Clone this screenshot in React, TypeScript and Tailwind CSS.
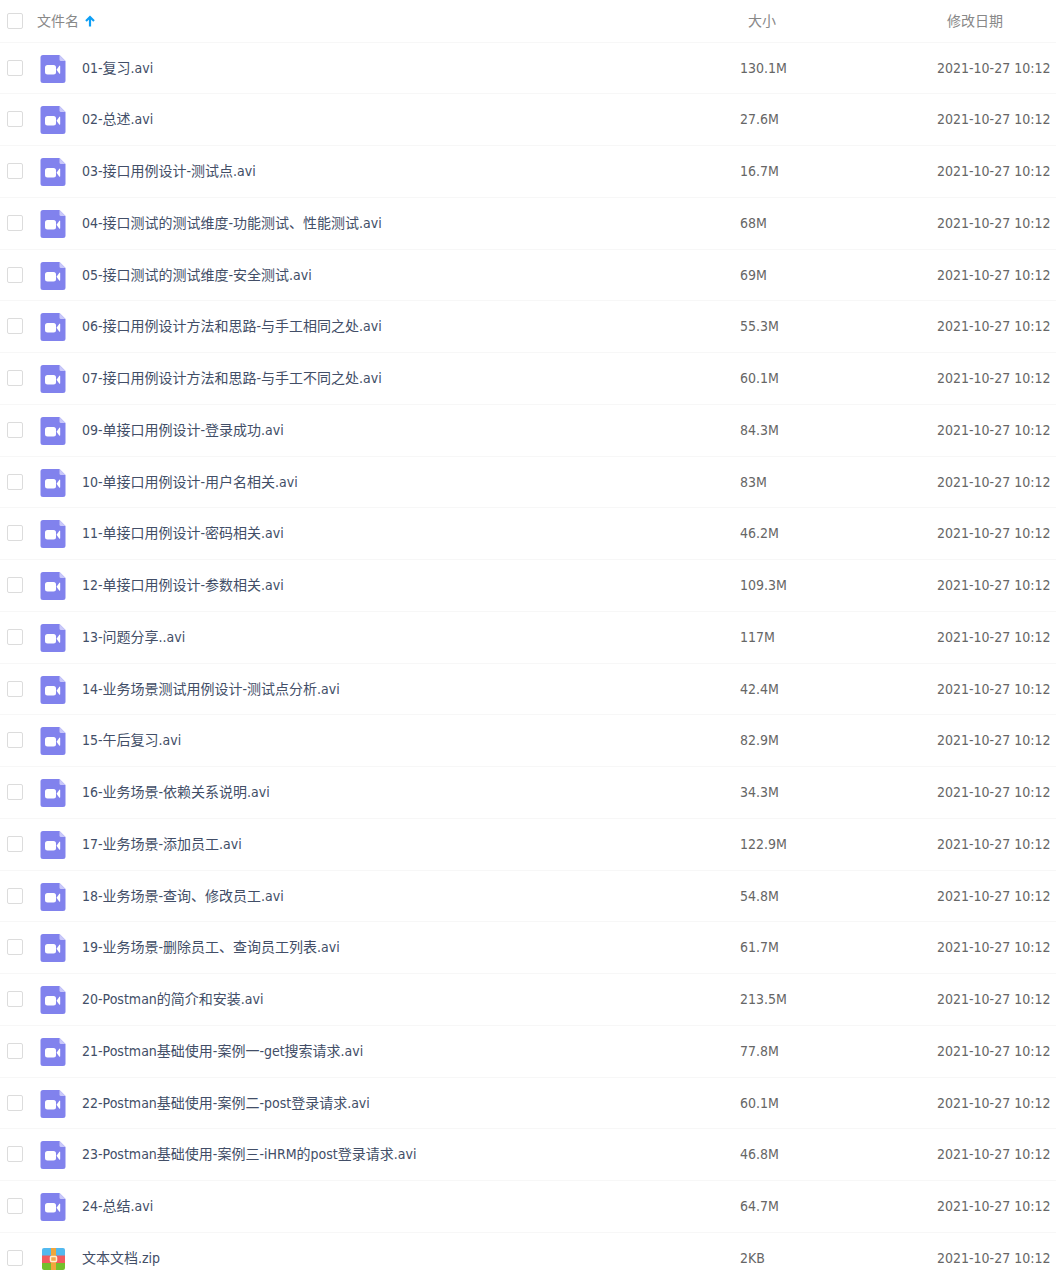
import { useState } from "react";

type FileItem = {
  name: string;
  size: string;
};

const MODIFIED = "2021-10-27 10:12";

const files: FileItem[] = [
  { name: "01-复习.avi", size: "130.1M" },
  { name: "02-总述.avi", size: "27.6M" },
  { name: "03-接口用例设计-测试点.avi", size: "16.7M" },
  { name: "04-接口测试的测试维度-功能测试、性能测试.avi", size: "68M" },
  { name: "05-接口测试的测试维度-安全测试.avi", size: "69M" },
  { name: "06-接口用例设计方法和思路-与手工相同之处.avi", size: "55.3M" },
  { name: "07-接口用例设计方法和思路-与手工不同之处.avi", size: "60.1M" },
  { name: "09-单接口用例设计-登录成功.avi", size: "84.3M" },
  { name: "10-单接口用例设计-用户名相关.avi", size: "83M" },
  { name: "11-单接口用例设计-密码相关.avi", size: "46.2M" },
  { name: "12-单接口用例设计-参数相关.avi", size: "109.3M" },
  { name: "13-问题分享..avi", size: "117M" },
  { name: "14-业务场景测试用例设计-测试点分析.avi", size: "42.4M" },
  { name: "15-午后复习.avi", size: "82.9M" },
  { name: "16-业务场景-依赖关系说明.avi", size: "34.3M" },
  { name: "17-业务场景-添加员工.avi", size: "122.9M" },
  { name: "18-业务场景-查询、修改员工.avi", size: "54.8M" },
  { name: "19-业务场景-删除员工、查询员工列表.avi", size: "61.7M" },
  { name: "20-Postman的简介和安装.avi", size: "213.5M" },
  { name: "21-Postman基础使用-案例一-get搜索请求.avi", size: "77.8M" },
  { name: "22-Postman基础使用-案例二-post登录请求.avi", size: "60.1M" },
  { name: "23-Postman基础使用-案例三-iHRM的post登录请求.avi", size: "46.8M" },
  { name: "24-总结.avi", size: "64.7M" },
  { name: "文本文档.zip", size: "2KB" },
];

function VideoIcon() {
  return (
    <svg width="26" height="28" viewBox="0 0 26 28" aria-hidden="true">
      <path
        d="M3 0H19.500l6 6v19.500a2.500 2.500 0 0 1-2.500 2.500H3A2.500 2.500 0 0 1 .5 25.500v-23A2.500 2.500 0 0 1 3 0z"
        fill="#8182ed"
      />
      <path d="M19.500 0l6 6H21A1.500 1.500 0 0 1 19.500 4.500z" fill="#c9c8fa" />
      <rect x="5" y="10" width="11" height="9.500" rx="2.500" fill="#fff" />
      <path d="M16.500 14.700l2.700-3.700q1-1 1 .4v6.600q0 1.400-1 .400z" fill="#fff" />
    </svg>
  );
}

function ZipIcon() {
  return (
    <svg width="26" height="28" viewBox="0 0 26 28" aria-hidden="true">
      <path d="M4 3h19a2 2 0 0 1 2 2v6H2V5a2 2 0 0 1 2-2z" fill="#52b9ef" />
      <path d="M2 10.500h23V18H2z" fill="#f25b5f" />
      <path d="M2 18h23v5a2 2 0 0 1-2 2H4a2 2 0 0 1-2-2z" fill="#73c02c" />
      <path d="M11 3h5v22h-5z" fill="#f0a63c" />
      <rect x="10.500" y="11.500" width="6" height="5" rx="1" fill="#f5a94a" stroke="#fff0d2" strokeWidth="1.500" />
    </svg>
  );
}

function SortArrow() {
  return (
    <svg width="10" height="12" viewBox="0 0 10 12" fill="none" aria-hidden="true">
      <path d="M5 11.500V2M1 6l4-4 4 4" stroke="#0e9ff5" strokeWidth="2.200" />
    </svg>
  );
}

function CheckBox({
  label,
  checked,
  onChange,
}: {
  label: string;
  checked: boolean;
  onChange: () => void;
}) {
  return (
    <input
      type="checkbox"
      aria-label={label}
      checked={checked}
      onChange={onChange}
      className="block size-4 appearance-none rounded-xs border border-[#dcdcdc] bg-white checked:border-[#0e9ff5] checked:bg-[#0e9ff5]"
    />
  );
}

export default function App() {
  const [selected, setSelected] = useState<string[]>([]);
  const allSelected = selected.length === files.length;

  const toggle = (name: string) =>
    setSelected((prev) =>
      prev.includes(name) ? prev.filter((n) => n !== name) : [...prev, name],
    );

  return (
    <main className="h-screen overflow-hidden bg-white font-[Tahoma,'DejaVu_Sans_Condensed','Noto_Sans_CJK_SC',sans-serif] text-sm">
      <table className="w-full table-fixed border-collapse text-left whitespace-nowrap">
        <colgroup>
          <col className="w-[37px]" />
          <col />
          <col className="w-[197px]" />
          <col className="w-[119px]" />
        </colgroup>
        <thead>
          <tr className="h-[42px] border-b border-[#f7f7f7] text-[#888]">
            <th className="pl-[7px]">
              <CheckBox
                label="全选"
                checked={allSelected}
                onChange={() =>
                  setSelected(allSelected ? [] : files.map((f) => f.name))
                }
              />
            </th>
            <th className="font-normal" aria-sort="ascending">
              <button type="button" className="flex items-center gap-1.5">
                文件名
                <SortArrow />
              </button>
            </th>
            <th className="pl-2 font-normal">大小</th>
            <th className="pl-2.5 font-normal">修改日期</th>
          </tr>
        </thead>
        <tbody>
          {files.map((file) => (
            <tr
              key={file.name}
              className="h-[52px] border-b border-[#f7f7f7] text-[#666] nth-[4n+1]:h-[51px]"
            >
              <td className="pl-[7px]">
                <CheckBox
                  label={file.name}
                  checked={selected.includes(file.name)}
                  onChange={() => toggle(file.name)}
                />
              </td>
              <td>
                <div className="flex items-center gap-4 pl-[3px]">
                  <span className="shrink-0 pt-0.5">
                    {file.name.endsWith(".zip") ? <ZipIcon /> : <VideoIcon />}
                  </span>
                  <a href="#" className="truncate text-[#424e67]">
                    {file.name}
                  </a>
                </div>
              </td>
              <td>{file.size}</td>
              <td>{MODIFIED}</td>
            </tr>
          ))}
        </tbody>
      </table>
    </main>
  );
}
